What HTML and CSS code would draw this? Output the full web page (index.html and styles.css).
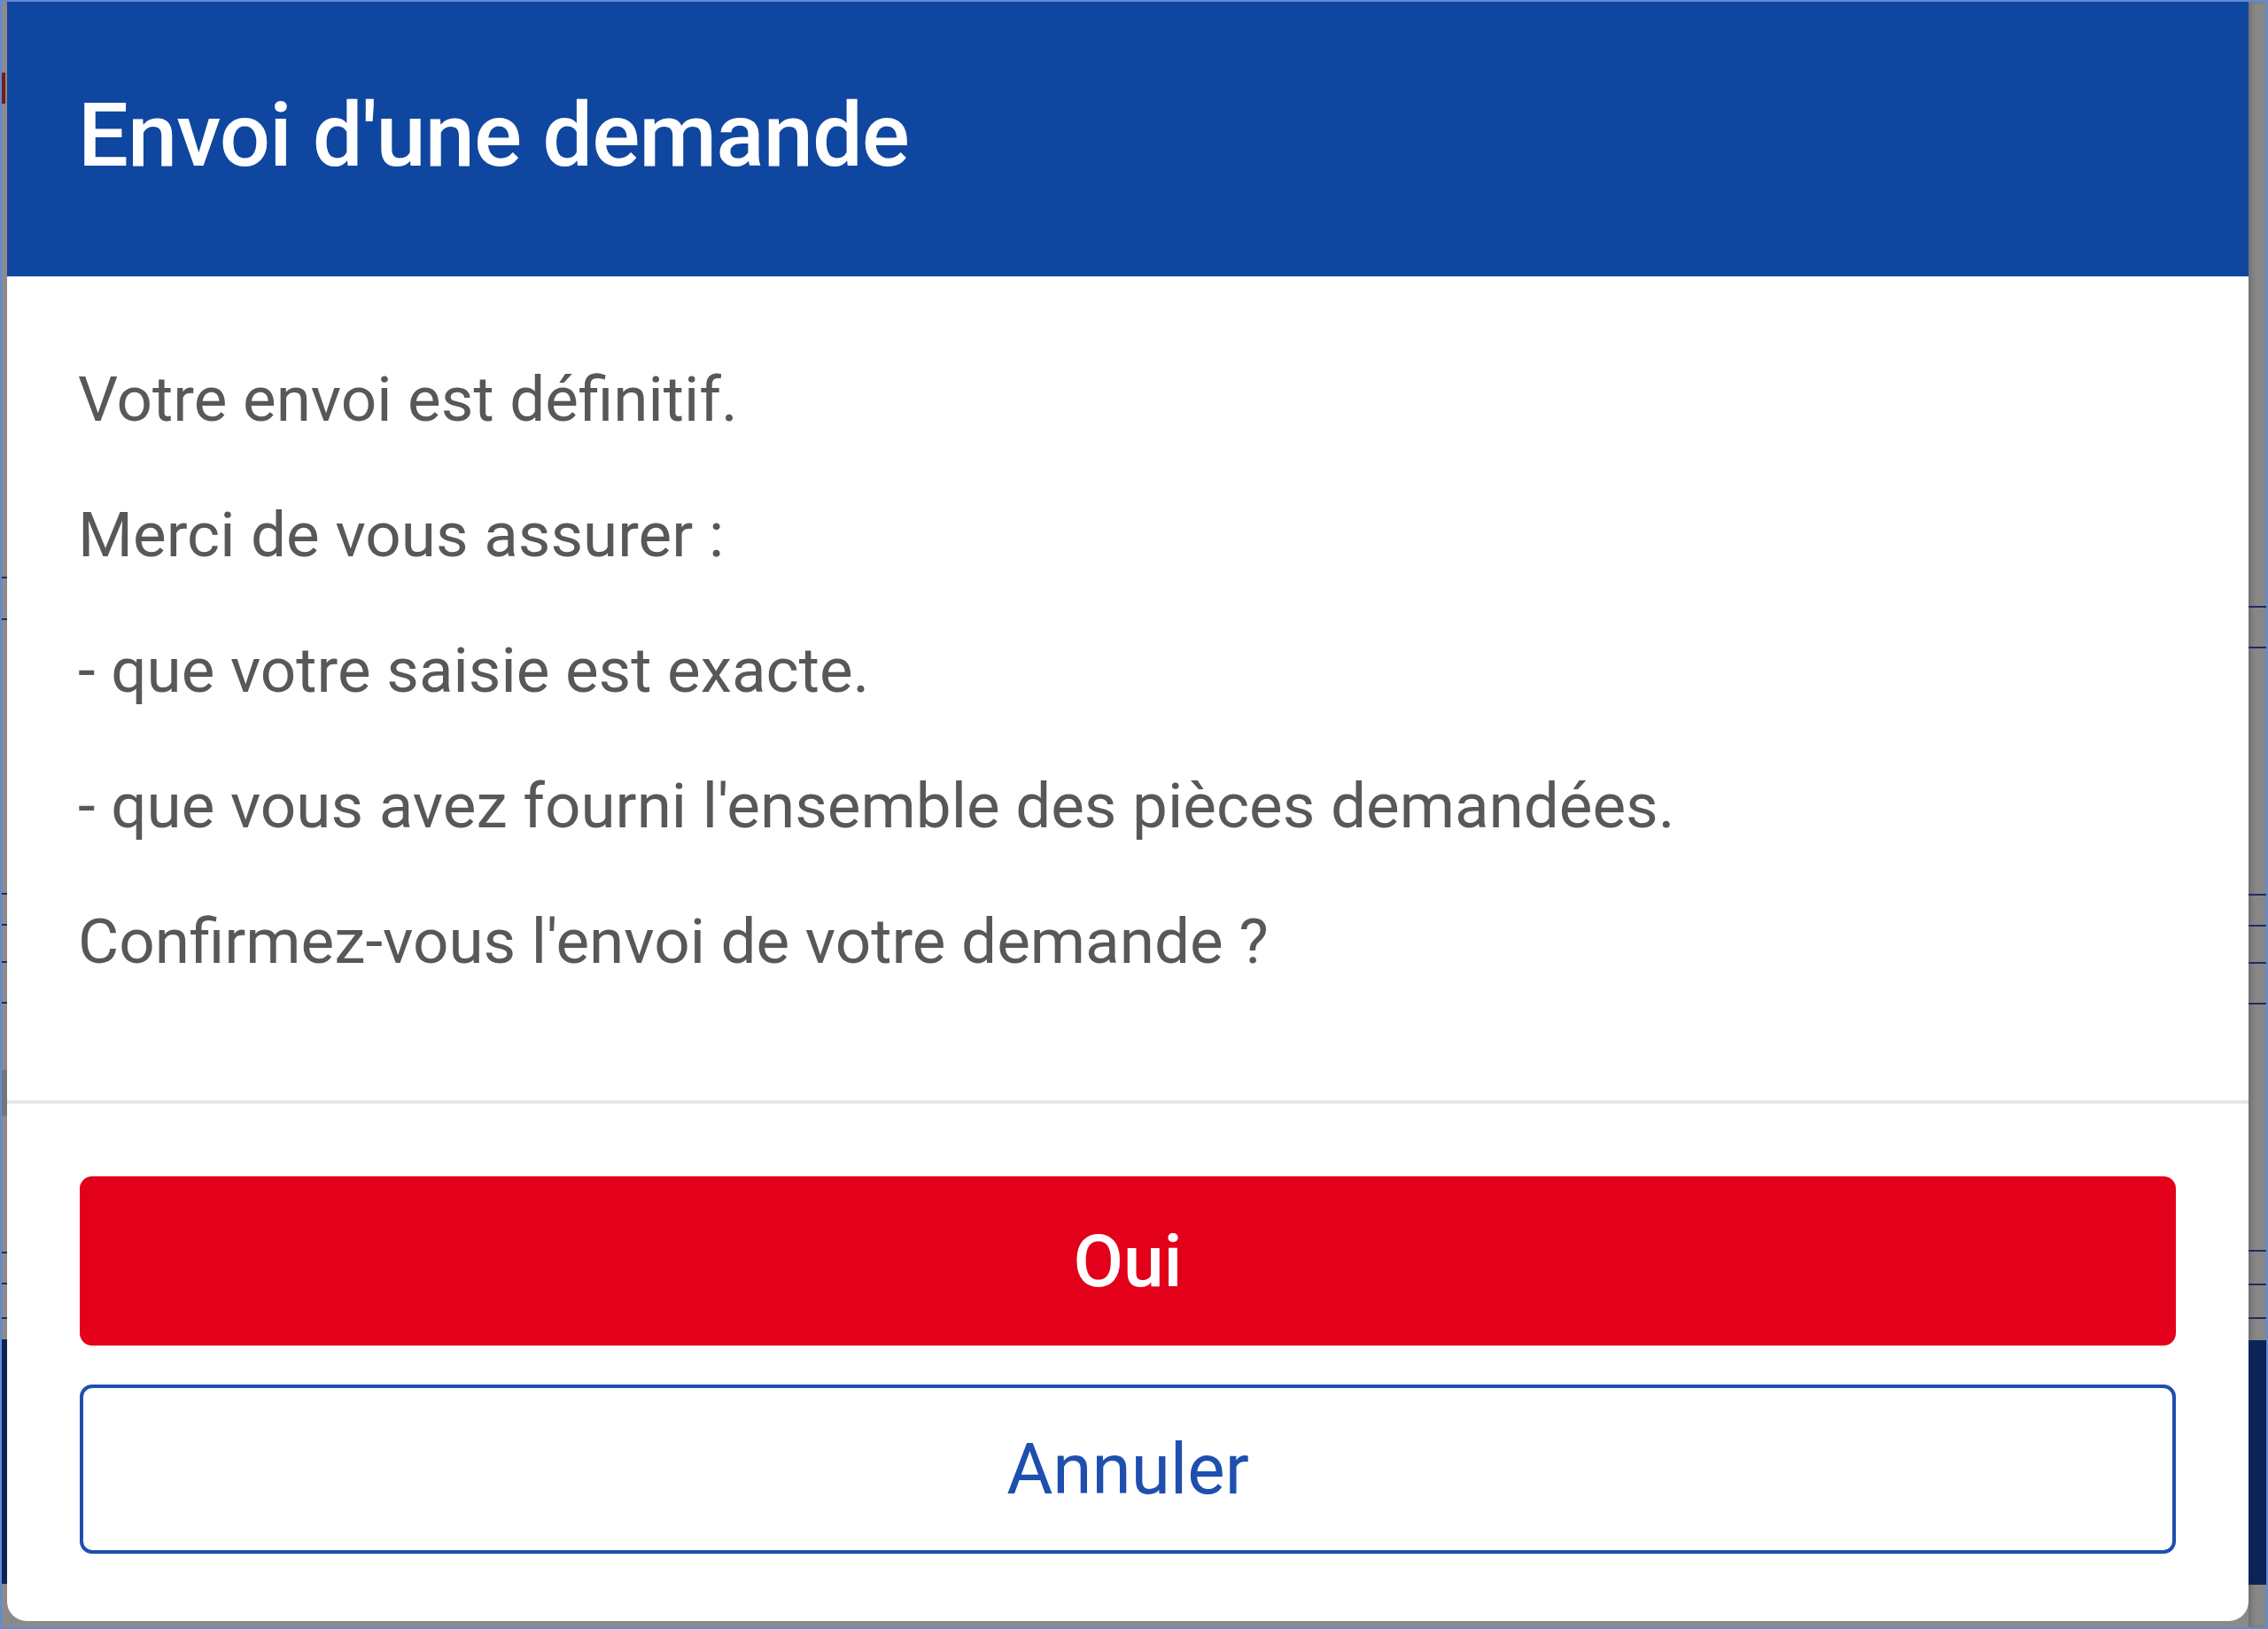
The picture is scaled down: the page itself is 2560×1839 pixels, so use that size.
FILE: index.html
```html
<!DOCTYPE html>
<html lang="fr">
<head>
<meta charset="utf-8">
<title>Envoi d'une demande</title>
<link rel="stylesheet" href="styles.css">
</head>
<body>
<div class="screen">
  <div class="strip strip-left">
    <div class="mark-red"></div>
    <div class="ln l1"></div>
    <div class="ln l2"></div>
    <div class="ln l3"></div>
    <div class="ln l4"></div>
    <div class="ln l5"></div>
    <div class="ln l6"></div>
    <div class="grey-block"></div>
    <div class="ln l7"></div>
    <div class="ln l8"></div>
    <div class="ln l9"></div>
    <div class="navy-block nb-left"></div>
  </div>
  <div class="modal">
    <div class="modal-header">
      <h1 class="modal-title">Envoi d'une demande</h1>
    </div>
    <div class="modal-body">
      <p>Votre envoi est définitif.</p>
      <p>Merci de vous assurer :</p>
      <p>- que votre saisie est exacte.</p>
      <p>- que vous avez fourni l'ensemble des pièces demandées.</p>
      <p>Confirmez-vous l'envoi de votre demande ?</p>
    </div>
    <div class="modal-footer">
      <button class="btn btn-primary">Oui</button>
      <button class="btn btn-outline">Annuler</button>
    </div>
  </div>
  <div class="strip strip-right">
    <div class="ln r1"></div>
    <div class="ln r2"></div>
    <div class="ln r3"></div>
    <div class="ln r4"></div>
    <div class="ln r5"></div>
    <div class="ln r6"></div>
    <div class="ln r7"></div>
    <div class="ln r8"></div>
    <div class="ln r9"></div>
    <div class="navy-block nb-right"></div>
  </div>
</div>
</body>
</html>
```
FILE: styles.css
```css
html, body {
  margin: 0;
  padding: 0;
  background: #5f8bd6;
}

.screen {
  width: 2560px;
  height: 1839px;
  box-sizing: border-box;
  border: 2px solid #5f8bd6;
  background: #8a8a8a;
  display: flex;
  align-items: flex-start;
  font-family: Roboto, "Noto Sans", "Liberation Sans", sans-serif;
}

.strip {
  display: flex;
  flex-direction: column;
  align-self: stretch;
}

.strip-left {
  width: 6px;
  background: #8c8a8a;
}

.strip-right {
  flex: 1;
  background: #878787;
  box-shadow: inset 4px 0 4px rgba(0, 0, 0, 0.15);
}

.ln {
  height: 2px;
  background: #1c2e5e;
  flex: none;
}

.mark-red {
  margin-top: 80px;
  height: 35px;
  width: 4px;
  background: #7a1a14;
  flex: none;
}

.grey-block {
  margin-top: 75px;
  height: 52px;
  background: #767676;
  flex: none;
}

.navy-block {
  height: 276px;
  background: #0b2357;
  flex: none;
}

.l1 { margin-top: 534px; }
.l2 { margin-top: 45px; }
.l3 { margin-top: 308px; }
.l4 { margin-top: 33px; }
.l5 { margin-top: 40px; }
.l6 { margin-top: 44px; }
.l7 { margin-top: 153px; }
.l8 { margin-top: 33px; }
.l9 { margin-top: 37px; }
.nb-left { margin-top: 23px; }

.r1 { margin-top: 682px; }
.r2 { margin-top: 44px; }
.r3 { margin-top: 277px; }
.r4 { margin-top: 33px; }
.r5 { margin-top: 40px; }
.r6 { margin-top: 44px; }
.r7 { margin-top: 277px; }
.r8 { margin-top: 36px; }
.r9 { margin-top: 36px; }
.nb-right { margin-top: 24px; }

.modal {
  width: 2530px;
  height: 1828px;
  flex: none;
  background: #ffffff;
  border-radius: 0 0 22px 22px;
  display: flex;
  flex-direction: column;
  overflow: hidden;
}

.modal-header {
  height: 310px;
  flex: none;
  background: #0f46a0;
  display: flex;
  align-items: center;
  padding-left: 80px;
  box-sizing: border-box;
}

.modal-title {
  margin: 0;
  color: #ffffff;
  font-size: 101px;
  font-weight: 500;
  line-height: 1;
  letter-spacing: -1px;
  padding-bottom: 9px;
}

.modal-body {
  padding: 62px 80px 103px;
  color: #585858;
  font-size: 71px;
}

.modal-body p {
  margin: 0;
  line-height: 153px;
}

.modal-footer {
  border-top: 4px solid #e6e6ea;
  padding: 82px 82px 0;
  display: flex;
  flex-direction: column;
  gap: 44px;
}

.btn {
  height: 191px;
  border-radius: 14px;
  font-family: Roboto, "Noto Sans", "Liberation Sans", sans-serif;
  cursor: pointer;
  display: flex;
  align-items: center;
  justify-content: center;
  box-sizing: border-box;
}

.btn-primary {
  background: #e2001a;
  border: none;
  color: #ffffff;
  font-size: 82px;
  font-weight: 500;
}

.btn-outline {
  background: #ffffff;
  border: 4px solid #1f4fae;
  color: #1f4fae;
  font-size: 80px;
  font-weight: 400;
}
```
